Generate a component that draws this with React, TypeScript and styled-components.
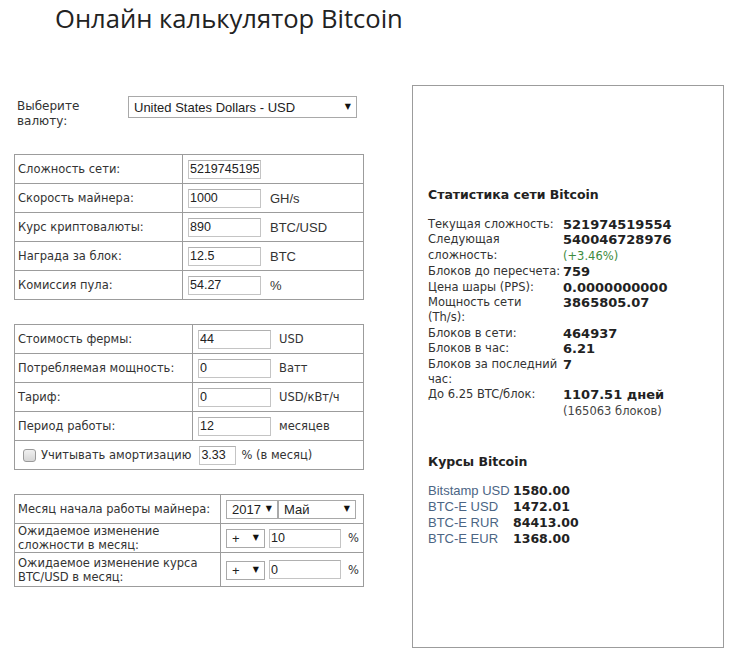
import React from "react";
import styled, { createGlobalStyle } from "styled-components";

const GlobalStyle = createGlobalStyle`
  body {
    margin: 0;
    background: #fff;
    color: #333;
    font-family: "DejaVu Sans", Verdana, sans-serif;
  }
`;

const Page = styled.div`
  width: 737px;
  padding-left: 14px;
  box-sizing: border-box;
`;

const Title = styled.h1`
  margin: 0 0 0 41px;
  padding-top: 2px;
  font-family: "Open Sans", sans-serif;
  font-weight: 400;
  font-size: 25.6px;
  line-height: 33px;
  color: #222;
`;

const Columns = styled.div`
  display: flex;
  align-items: flex-start;
  gap: 48px;
  margin-top: 50px;
`;

const LeftColumn = styled.div`
  width: 350px;
  padding-top: 11px;
  display: flex;
  flex-direction: column;
`;

const CurrencyRow = styled.div`
  display: flex;
  align-items: flex-start;
  margin-bottom: 25px;
`;

const CurrencyLabel = styled.div`
  width: 114px;
  padding: 3px 0 0 3px;
  box-sizing: border-box;
  font-size: 12px;
  line-height: 15px;
`;

const SelectWrap = styled.div<{ $width: number }>`
  position: relative;
  width: ${(p) => p.$width}px;
  flex: none;
`;

const Select = styled.select<{ $height?: number }>`
  appearance: none;
  width: 100%;
  height: ${(p) => p.$height ?? 19}px;
  margin: 0;
  padding: 0 14px 0 5px;
  box-sizing: border-box;
  border: 1px solid #a9a9a9;
  border-radius: 0;
  background: #fff;
  color: #222;
  font-family: "Liberation Sans", Arial, sans-serif;
  font-size: 13px;
  outline: none;
`;

const Arrow = styled.span`
  position: absolute;
  right: 6px;
  top: 50%;
  transform: translateY(-50%);
  font-size: 8px;
  line-height: 1;
  color: #111;
  pointer-events: none;
`;

const FormGrid = styled.div<{ $labelWidth: number }>`
  display: grid;
  grid-template-columns: ${(p) => p.$labelWidth}px 1fr;
  width: 350px;
  box-sizing: border-box;
  border-top: 1px solid #9c9c9c;
  border-left: 1px solid #9c9c9c;
  margin-bottom: 24px;
`;

const Cell = styled.div<{ $span?: boolean; $tall?: boolean }>`
  grid-column: ${(p) => (p.$span ? "1 / 3" : "auto")};
  min-height: ${(p) => (p.$tall ? 33 : 28)}px;
  display: flex;
  align-items: center;
  border-right: 1px solid #9c9c9c;
  border-bottom: 1px solid #9c9c9c;
`;

const LabelCell = styled(Cell)`
  padding-left: 3px;
  font-size: 11.5px;
  line-height: 14px;
`;

const ValueCell = styled(Cell)`
  padding: 0 4px 0 5px;
`;

const TextInput = styled.input<{ $width: number; $gap?: number }>`
  width: ${(p) => p.$width}px;
  height: 19px;
  margin: 0 0 0 ${(p) => p.$gap ?? 0}px;
  padding: 0 1px;
  box-sizing: border-box;
  border: 1px solid #c4c4c4;
  border-top-color: #b0b0b0;
  border-radius: 0;
  color: #222;
  font-family: "Liberation Sans", Arial, sans-serif;
  font-size: 12.5px;
  outline: none;
  flex: none;
`;

const Unit = styled.span<{ $gap?: number; $sans?: boolean }>`
  margin-left: ${(p) => p.$gap ?? 9}px;
  font-family: ${(p) =>
    p.$sans ? `"Liberation Sans", Arial, sans-serif` : `"DejaVu Sans", Verdana, sans-serif`};
  font-size: ${(p) => (p.$sans ? 13 : 11.5)}px;
  white-space: nowrap;
`;

const PushUnit = styled.span`
  margin-left: auto;
  font-size: 11.5px;
`;

const AmortRow = styled(Cell)`
  padding-left: 8px;
  font-size: 11.5px;
`;

const Check = styled.input`
  appearance: none;
  width: 13px;
  height: 13px;
  margin: 0 5px 0 0;
  border: 1px solid #9a9a9a;
  border-radius: 3px;
  background: linear-gradient(#f0f0f0, #d6d6d6);
  flex: none;
`;

const AmortText = styled.span`
  margin-right: 8px;
  white-space: nowrap;
`;

const Panel = styled.div`
  width: 312px;
  height: 563px;
  box-sizing: border-box;
  border: 1px solid #9c9c9c;
  padding: 101px 10px 0 15px;
  color: #333;
`;

const PanelHeading = styled.h3<{ $gap: number }>`
  margin: 0 0 ${(p) => p.$gap}px;
  font-size: 12.5px;
  line-height: 16px;
  font-weight: 700;
  color: #222;
`;

const StatsGrid = styled.div`
  display: grid;
  grid-template-columns: 135px 1fr;
  font-size: 11.5px;
  line-height: 15.4px;
  margin-bottom: 35px;
`;

const StatLabel = styled.div`
  white-space: nowrap;
`;

const StatValue = styled.div`
  font-weight: 700;
  font-size: 13px;
  color: #222;
  white-space: nowrap;
`;

const Note = styled.span<{ $green?: boolean }>`
  font-weight: 400;
  font-size: 11.5px;
  color: ${(p) => (p.$green ? "#3d8b3d" : "#444")};
`;

const RatesGrid = styled.div`
  display: grid;
  grid-template-columns: 85px 1fr;
  line-height: 16px;
`;

const RateLabel = styled.div`
  font-family: "Liberation Sans", Arial, sans-serif;
  font-size: 13px;
  color: #4b6584;
  white-space: nowrap;
`;

const RateValue = styled.div`
  font-weight: 700;
  font-size: 12.5px;
  color: #222;
`;

const SelectBox = ({ width, value, height }: { width: number; value: string; height?: number }) => (
  <SelectWrap $width={width}>
    <Select $height={height} defaultValue={value}>
      <option>{value}</option>
    </Select>
    <Arrow>▼</Arrow>
  </SelectWrap>
);

const mainRows = [
  { label: "Сложность сети:", value: "5219745195", unit: "" },
  { label: "Скорость майнера:", value: "1000", unit: "GH/s" },
  { label: "Курс криптовалюты:", value: "890", unit: "BTC/USD" },
  { label: "Награда за блок:", value: "12.5", unit: "BTC" },
  { label: "Комиссия пула:", value: "54.27", unit: "%" },
];

const farmRows = [
  { label: "Стоимость фермы:", value: "44", unit: "USD" },
  { label: "Потребляемая мощность:", value: "0", unit: "Ватт" },
  { label: "Тариф:", value: "0", unit: "USD/кВт/ч" },
  { label: "Период работы:", value: "12", unit: "месяцев" },
];

const stats: { label: React.ReactNode; value: React.ReactNode }[] = [
  { label: "Текущая сложность:", value: "521974519554" },
  {
    label: (
      <>
        Следующая
        <br />
        сложность:
      </>
    ),
    value: (
      <>
        540046728976
        <br />
        <Note $green>(+3.46%)</Note>
      </>
    ),
  },
  { label: "Блоков до пересчета:", value: "759" },
  { label: "Цена шары (PPS):", value: "0.0000000000" },
  {
    label: (
      <>
        Мощность сети
        <br />
        (Th/s):
      </>
    ),
    value: "3865805.07",
  },
  { label: "Блоков в сети:", value: "464937" },
  { label: "Блоков в час:", value: "6.21" },
  {
    label: (
      <>
        Блоков за последний
        <br />
        час:
      </>
    ),
    value: "7",
  },
  {
    label: "До 6.25 BTC/блок:",
    value: (
      <>
        1107.51 дней
        <br />
        <Note>(165063 блоков)</Note>
      </>
    ),
  },
];

const rates = [
  { label: "Bitstamp USD", value: "1580.00" },
  { label: "BTC-E USD", value: "1472.01" },
  { label: "BTC-E RUR", value: "84413.00" },
  { label: "BTC-E EUR", value: "1368.00" },
];

const App = () => {
  return (
    <>
      <GlobalStyle />
      <Page>
        <Title>Онлайн калькулятор Bitcoin</Title>
        <Columns>
          <LeftColumn>
            <CurrencyRow>
              <CurrencyLabel>
                Выберите
                <br />
                валюту:
              </CurrencyLabel>
              <SelectBox width={229} height={22} value="United States Dollars - USD" />
            </CurrencyRow>

            <FormGrid $labelWidth={168}>
              {mainRows.map((r) => (
                <React.Fragment key={r.label}>
                  <LabelCell>{r.label}</LabelCell>
                  <ValueCell>
                    <TextInput $width={73} defaultValue={r.value} />
                    {r.unit && <Unit $sans>{r.unit}</Unit>}
                  </ValueCell>
                </React.Fragment>
              ))}
            </FormGrid>

            <FormGrid $labelWidth={178}>
              {farmRows.map((r) => (
                <React.Fragment key={r.label}>
                  <LabelCell>{r.label}</LabelCell>
                  <ValueCell>
                    <TextInput $width={73} defaultValue={r.value} />
                    <Unit $gap={8}>{r.unit}</Unit>
                  </ValueCell>
                </React.Fragment>
              ))}
              <AmortRow $span>
                <Check type="checkbox" />
                <AmortText>Учитывать амортизацию</AmortText>
                <TextInput $width={37} defaultValue="3.33" />
                <Unit $gap={5}>% (в месяц)</Unit>
              </AmortRow>
            </FormGrid>

            <FormGrid $labelWidth={206}>
              <LabelCell>Месяц начала работы майнера:</LabelCell>
              <ValueCell>
                <SelectBox width={52} value="2017" />
                <SelectBox width={78} value="Май" />
              </ValueCell>
              <LabelCell>
                Ожидаемое изменение
                <br />
                сложности в месяц:
              </LabelCell>
              <ValueCell>
                <SelectBox width={39} value="+" />
                <TextInput $width={72} $gap={4} defaultValue="10" />
                <PushUnit>%</PushUnit>
              </ValueCell>
              <LabelCell $tall>
                Ожидаемое изменение курса
                <br />
                BTC/USD в месяц:
              </LabelCell>
              <ValueCell $tall>
                <SelectBox width={39} value="+" />
                <TextInput $width={72} $gap={4} defaultValue="0" />
                <PushUnit>%</PushUnit>
              </ValueCell>
            </FormGrid>
          </LeftColumn>

          <Panel>
            <PanelHeading $gap={14}>Статистика сети Bitcoin</PanelHeading>
            <StatsGrid>
              {stats.map((s, i) => (
                <React.Fragment key={i}>
                  <StatLabel>{s.label}</StatLabel>
                  <StatValue>{s.value}</StatValue>
                </React.Fragment>
              ))}
            </StatsGrid>
            <PanelHeading $gap={13}>Курсы Bitcoin</PanelHeading>
            <RatesGrid>
              {rates.map((r) => (
                <React.Fragment key={r.label}>
                  <RateLabel>{r.label}</RateLabel>
                  <RateValue>{r.value}</RateValue>
                </React.Fragment>
              ))}
            </RatesGrid>
          </Panel>
        </Columns>
      </Page>
    </>
  );
};

export default App;
